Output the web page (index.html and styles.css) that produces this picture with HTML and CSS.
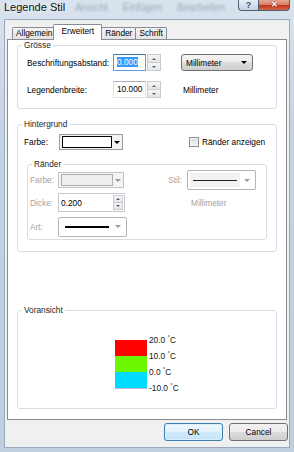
FILE: index.html
```html
<!DOCTYPE html>
<html lang="de">
  <head>
    <meta charset="UTF-8" />
    <title>Legende Stil</title>
    <link rel="stylesheet" href="styles.css">
  </head>
  <body>
    <div class="window">
      <div class="titlebar">
        <span class="title">Legende Stil</span>
        <span class="ghost">Ansicht Einfügen Bearbeiten</span>
        <div class="caption-btns">
          <span class="help">?</span>
          <span class="close">✕</span>
        </div>
      </div>

      <div class="client">
        <div class="tabs">
          <span class="tab">Allgemein</span>
          <span class="tab active">Erweitert</span>
          <span class="tab">Ränder</span>
          <span class="tab">Schrift</span>
        </div>

        <div class="panel">
          <fieldset class="group size">
            <legend>Grösse</legend>
            <div class="row first">
              <span class="lbl">Beschriftungsabstand:</span>
              <span class="num focus"><span class="sel">0.000</span></span>
              <span class="spin"><i class="up"></i><i class="down"></i></span>
              <span class="combo">Millimeter<b class="arrow"></b></span>
            </div>
            <div class="row second">
              <span class="lbl">Legendenbreite:</span>
              <span class="num">10.000</span>
              <span class="spin"><i class="up"></i><i class="down"></i></span>
              <span class="unit">Millimeter</span>
            </div>
          </fieldset>

          <fieldset class="group background">
            <legend>Hintergrund</legend>
            <div class="row fill">
              <span class="lbl">Farbe:</span>
              <span class="colorpick"><span class="swatch"></span><b class="arrow"></b></span>
              <label class="check"><span class="box"></span>Ränder anzeigen</label>
            </div>

            <fieldset class="group borders">
              <legend>Ränder</legend>
              <div class="grid">
                <span class="lbl off">Farbe:</span>
                <span class="colorpick disabled"><span class="swatch"></span><b class="arrow"></b></span>
                <span class="lbl off right">Stil:</span>
                <span class="linepick thin"><span class="line"></span><b class="arrow"></b></span>

                <span class="lbl off">Dicke:</span>
                <span class="numbox">0.200<span class="spin small"><i class="up"></i><i class="down"></i></span></span>
                <span></span>
                <span class="lbl off unit2">Millimeter</span>

                <span class="lbl off">Art:</span>
                <span class="linepick thick"><span class="line"></span><b class="arrow"></b></span>
              </div>
            </fieldset>
          </fieldset>

          <fieldset class="group preview">
            <legend>Voransicht</legend>
            <div class="legend-preview">
              <div class="swatches">
                <div class="sw red"></div>
                <div class="sw green"></div>
                <div class="sw cyan"></div>
              </div>
              <div class="labels">
                <span>20.0 <sup>°</sup>C</span>
                <span>10.0 <sup>°</sup>C</span>
                <span>0.0 <sup>°</sup>C</span>
                <span>-10.0 <sup>°</sup>C</span>
              </div>
            </div>
          </fieldset>
        </div>

        <div class="buttons">
          <span class="btn default">OK</span>
          <span class="btn">Cancel</span>
        </div>
      </div>
    </div>
  </body>
</html>
```

FILE: styles.css
```css
* {
  box-sizing: border-box;
}

body {
  margin: 0;
  font-family: "Liberation Sans", Arial, sans-serif;
  font-size: 8.3px;
  color: #000;
}

.window {
  width: 294px;
  height: 452px;
  overflow: hidden;
  background: linear-gradient(#d9e3ee, #c3d2e3 30%, #bfcfe0);
}

/* title bar */

.titlebar {
  height: 19px;
  display: flex;
  align-items: flex-start;
}

.title {
  font-size: 11px;
  line-height: 13px;
  padding: 1px 0 0 4px;
  color: #111;
  white-space: nowrap;
  text-shadow: 0 0 5px #fff;
}

.ghost {
  width: 150px;
  margin-left: 10px;
  padding-top: 2px;
  font-size: 10px;
  color: rgba(70, 85, 110, 0.4);
  filter: blur(1.3px);
  word-spacing: 12px;
  white-space: nowrap;
}

.caption-btns {
  display: flex;
  margin: 0 4px 0 auto;
}

.help,
.close {
  height: 11px;
  border: 1px solid #4e5e72;
  border-top: none;
  text-align: center;
  font-weight: bold;
  line-height: 10px;
}

.help {
  width: 20px;
  border-radius: 0 0 0 4px;
  border-right: none;
  background: linear-gradient(#e6edf5, #c6d3e1);
  color: #445467;
  font-size: 9px;
}

.close {
  width: 32px;
  border-radius: 0 0 4px 0;
  background: linear-gradient(#e6a797 0%, #d98068 45%, #c6331c 55%, #d06a4c 100%);
  color: #fff;
  font-size: 8px;
  text-shadow: 0 0 2px #5a1010;
}

/* client area */

.client {
  width: 286px;
  height: 429px;
  margin-left: 4px;
  border: 1px solid #9aa9bc;
  background: #f0f0f0;
}

.tabs {
  display: flex;
  align-items: flex-end;
  height: 19px;
  margin-left: 7px;
}

.tab {
  height: 12px;
  line-height: 11px;
  padding: 0 3px;
  margin-right: -1px;
  border: 1px solid #898c95;
  border-bottom: none;
  border-radius: 2px 2px 0 0;
  background: linear-gradient(#f5f5f5, #e2e2e2);
  white-space: nowrap;
}

.tab.active {
  position: relative;
  z-index: 1;
  height: 16px;
  line-height: 13px;
  padding: 0 7px;
  margin: 0 -1px -1px -2px;
  background: #fff;
}

.panel {
  height: 381px;
  margin: 0 2px;
  border: 1px solid #898c95;
  background: #fff;
}

/* group boxes */

.group {
  margin: 0 9px;
  padding: 0;
  min-width: 0;
  border: 1px solid #d5dfe5;
  border-radius: 3px;
}

.group legend {
  margin-left: 4px;
  padding: 0 2px;
  line-height: 10px;
  color: #1e1e1e;
}

.row {
  display: flex;
  align-items: center;
}

.lbl {
  white-space: nowrap;
}

.off {
  color: #a3a3a3;
}

.size {
  padding-bottom: 10px;
}

.size .row {
  height: 17px;
  margin-left: 9px;
}

.size .row.first {
  margin-top: 4px;
}

.size .row.second {
  margin-top: 10px;
}

.size .lbl {
  width: 86px;
}

.num {
  width: 33px;
  height: 17px;
  padding-left: 3px;
  line-height: 15px;
  border: 1px solid #dbdfe6;
  border-top-color: #abadb3;
}

.num.focus {
  border-color: #569de5;
  border-top-color: #3d7bad;
}

.sel {
  background: #3399ff;
  color: #fff;
}

.spin {
  display: flex;
  flex-direction: column;
  width: 14px;
  height: 17px;
  margin-left: 1px;
}

.spin i {
  flex: 1;
  display: flex;
  align-items: center;
  justify-content: center;
  border: 1px solid #c9cdd3;
  background: linear-gradient(#f7f7f7, #e4e4e4);
}

.spin i.down {
  border-top: none;
}

.spin i::after {
  content: "";
  border-left: 2px solid transparent;
  border-right: 2px solid transparent;
}

.spin i.up::after {
  border-bottom: 2px solid #4a5c7a;
}

.spin i.down::after {
  border-top: 2px solid #4a5c7a;
}

.combo {
  display: flex;
  align-items: center;
  width: 72px;
  height: 17px;
  margin-left: 20px;
  padding: 0 5px 0 4px;
  border: 1px solid #707070;
  border-radius: 3px;
  background: linear-gradient(#f2f2f2 0%, #ebebeb 50%, #dddddd 50%, #cfcfcf 100%);
}

.arrow {
  margin-left: auto;
  border-left: 3px solid transparent;
  border-right: 3px solid transparent;
  border-top: 3px solid #000;
}

.unit {
  margin-left: 22px;
}

/* background */

.background {
  margin-top: 10px;
  padding-bottom: 11px;
}

.fill {
  height: 16px;
  margin: 5px 0 0 6px;
}

.fill .lbl {
  width: 35px;
}

.colorpick {
  display: flex;
  align-items: center;
  width: 64px;
  height: 16px;
  padding: 1px 1px 1px 2px;
  border: 1px solid #9c9c9c;
  background: #f4f4f4;
}

.colorpick .swatch {
  flex: 1;
  height: 100%;
  border: 1px solid #000;
  background: #fff;
}

.colorpick .arrow {
  margin: 0 1px 0 2px;
}

.colorpick.disabled {
  width: 66px;
  border-color: #c4c4c4;
}

.colorpick.disabled .swatch {
  border-color: #b0b0b0;
  background: #efefef;
}

.colorpick.disabled .arrow {
  border-top-color: #9a9a9a;
}

.check {
  display: flex;
  align-items: center;
  margin-left: 66px;
  white-space: nowrap;
}

.check .box {
  width: 10px;
  height: 10px;
  margin-right: 3px;
  border: 1px solid #8f8f8f;
  background: linear-gradient(#d8d8d8, #f7f7f7);
  box-shadow: inset 0 0 0 1px #f4f4f4;
}

.borders {
  margin-top: 9px;
  padding-bottom: 4px;
}

.grid {
  display: grid;
  grid-template-columns: 28px 70px 59px 70px;
  grid-template-rows: 20px 19px 20px;
  row-gap: 3px;
  align-items: center;
  margin: 1px 0 0 2px;
}

.grid > :nth-child(n + 9) {
  margin-top: 3px;
}

.right {
  text-align: right;
  padding-right: 5px;
}

.unit2 {
  padding-left: 4px;
}

.numbox {
  display: flex;
  align-items: center;
  width: 67px;
  height: 19px;
  padding: 1px 1px 1px 2px;
  border: 1px solid #c6c9ce;
  color: #000;
}

.spin.small {
  width: 10px;
  height: 15px;
  margin-left: auto;
}

.linepick {
  display: flex;
  align-items: center;
  width: 69px;
  height: 20px;
  padding: 2px 5px 2px 2px;
  border: 1px solid #b5b5b5;
  border-radius: 2px;
  background: #fff;
}

.linepick .line {
  display: flex;
  align-items: center;
  width: 50px;
  height: 100%;
  padding: 0 3px;
  background: #f2f2f2;
}

.linepick .line::after {
  content: "";
  flex: 1;
  border-top: 1px solid #222;
}

.linepick.thick .line {
  width: 52px;
  padding: 0 4px;
  background: #fff;
}

.linepick.thick .line::after {
  border-top: 2px solid #000;
}

.linepick .arrow {
  border-top-color: #9a9a9a;
}

/* preview */

.preview {
  margin-top: 53px;
  padding: 25px 0 19px;
}

.legend-preview {
  display: flex;
  align-items: flex-start;
  margin-left: 97px;
}

.swatches {
  width: 32px;
  border-bottom: 1px solid #b7b4d6;
}

.sw {
  height: 16px;
}

.red {
  background: #ff0000;
}

.green {
  background: #6cf600;
}

.cyan {
  background: #00dcff;
}

.labels {
  display: flex;
  flex-direction: column;
  height: 49px;
  margin: -8px 0 0 2px;
}

.labels span {
  height: 16px;
  flex-shrink: 0;
  line-height: 16px;
  white-space: nowrap;
  color: #111;
}

.labels sup {
  font-size: 6px;
  line-height: 0;
}

/* buttons */

.buttons {
  display: flex;
  justify-content: flex-end;
  gap: 6px;
  margin: 3px 1px 0 0;
}

.btn {
  width: 59px;
  height: 18px;
  line-height: 16px;
  text-align: center;
  border: 1px solid #707070;
  border-radius: 3px;
  background: linear-gradient(#f2f2f2 0%, #ebebeb 50%, #dddddd 50%, #cfcfcf 100%);
}

.btn.default {
  border-color: #3c7fb1;
  background: linear-gradient(#f1f8fd 0%, #e4f2fc 50%, #d2ebfb 50%, #c4e3f8 100%);
  box-shadow: inset 0 0 0 1px #dcf1fc;
}
```
